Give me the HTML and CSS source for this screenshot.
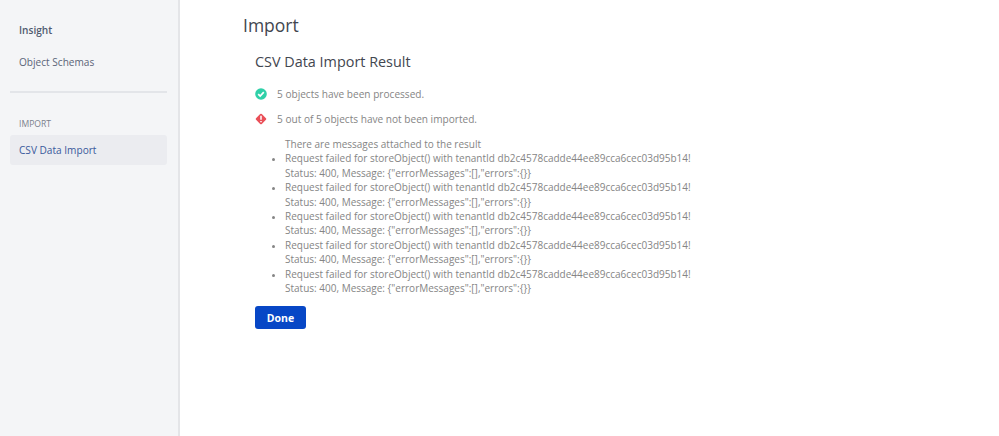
FILE: index.html
```html
<!DOCTYPE html>
<html lang="en">
<head>
  <meta charset="UTF-8" />
  <title>CSV Data Import</title>
  <link rel="stylesheet" href="styles.css">
</head>
<body>
  <div class="layout">
    <div class="sidebar">
      <div class="nav-group">
        <div class="nav-title">Insight</div>
        <div class="nav-link">Object Schemas</div>
      </div>
      <div class="nav-divider"></div>
      <div class="nav-heading">IMPORT</div>
      <div class="nav-active">CSV Data Import</div>
    </div>

    <div class="content">
      <h1>Import</h1>
      <div class="result">
        <h2>CSV Data Import Result</h2>

        <div class="status-row">
          <svg class="status-icon" viewBox="0 0 12 12">
            <circle cx="6" cy="6" r="5.8" fill="#2fd0a8" />
            <path d="M3.2 6.1l2 2 3.6-3.9" fill="none" stroke="#fff" stroke-width="1.7" />
          </svg>
          <span>5 objects have been processed.</span>
        </div>
        <div class="status-row">
          <svg class="status-icon" viewBox="0 0 12 12">
            <rect x="1.9" y="1.9" width="8.2" height="8.2" rx="1.2" transform="rotate(45 6 6)" fill="#ea4f58" />
            <path d="M6 2.8v4M6 7.9v1.3" fill="none" stroke="#fff" stroke-width="1.5" />
          </svg>
          <span>5 out of 5 objects have not been imported.</span>
        </div>

        <div class="messages">
          <div>There are messages attached to the result</div>
          <ul>
            <li>Request failed for storeObject() with tenantId db2c4578cadde44ee89cca6cec03d95b14!<br>Status: 400, Message: {"errorMessages":[],"errors":{}}</li>
            <li>Request failed for storeObject() with tenantId db2c4578cadde44ee89cca6cec03d95b14!<br>Status: 400, Message: {"errorMessages":[],"errors":{}}</li>
            <li>Request failed for storeObject() with tenantId db2c4578cadde44ee89cca6cec03d95b14!<br>Status: 400, Message: {"errorMessages":[],"errors":{}}</li>
            <li>Request failed for storeObject() with tenantId db2c4578cadde44ee89cca6cec03d95b14!<br>Status: 400, Message: {"errorMessages":[],"errors":{}}</li>
            <li>Request failed for storeObject() with tenantId db2c4578cadde44ee89cca6cec03d95b14!<br>Status: 400, Message: {"errorMessages":[],"errors":{}}</li>
          </ul>
        </div>

        <button class="done-button">Done</button>
      </div>
    </div>
  </div>
</body>
</html>
```

FILE: styles.css
```css
body {
  margin: 0;
  font-family: "Open Sans", sans-serif;
  font-size: 10.1px;
  background: #fff;
  color: #858585;
}

.layout {
  display: flex;
  height: 436px;
  overflow: hidden;
}

.sidebar {
  width: 180px;
  flex-shrink: 0;
  box-sizing: border-box;
  padding: 0 11px 0 10px;
  background: #f4f5f7;
  border-right: 2px solid #e4e5e8;
}

.nav-group {
  padding: 22px 9px 21px;
}

.nav-title {
  font-weight: 600;
  color: #505a70;
  line-height: 16px;
}

.nav-link {
  margin-top: 16px;
  color: #5b6478;
  line-height: 16px;
}

.nav-divider {
  height: 2px;
  background: #e3e5e9;
}

.nav-heading {
  margin-top: 25px;
  padding-left: 9px;
  font-size: 8.6px;
  line-height: 12px;
  color: #7a808c;
}

.nav-active {
  margin-top: 5px;
  padding-left: 9px;
  height: 30px;
  line-height: 30px;
  border-radius: 3px;
  background: #ebecf0;
  color: #3a5a9c;
}

.content {
  flex: 1;
  padding-left: 63px;
}

h1 {
  margin: 12px 0 0;
  font-size: 17.5px;
  font-weight: 400;
  line-height: 26px;
  color: #42464f;
}

.result {
  padding: 14px 0 0 12px;
}

h2 {
  margin: 0 0 9px;
  font-size: 14.4px;
  font-weight: 400;
  line-height: 20px;
  color: #42464f;
}

.status-row {
  display: flex;
  align-items: center;
  gap: 10px;
  height: 25px;
}

.status-icon {
  width: 12px;
  height: 12px;
}

.messages {
  margin-top: 6px;
  white-space: nowrap;
  padding-left: 30px;
  font-size: 10px;
  line-height: 14.4px;
}

.messages ul {
  margin: 0;
  padding: 0;
}

.messages li::marker {
  font-size: 9px;
}

.done-button {
  display: block;
  width: 51px;
  height: 23px;
  margin-top: 11px;
  padding: 0;
  border: none;
  border-radius: 3px;
  background: #0747c6;
  color: #fff;
  font-family: "Open Sans", sans-serif;
  font-size: 10.5px;
  font-weight: 700;
}
```
